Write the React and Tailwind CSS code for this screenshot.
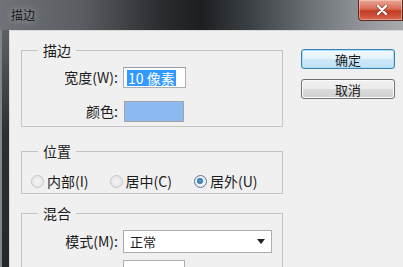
import React from "react";

function Radio({ label, checked }) {
  return (
    <label className="flex items-center gap-[3px]">
      <span
        className={
          checked
            ? "flex h-[13px] w-[13px] items-center justify-center rounded-full border border-[#5a7894] bg-[radial-gradient(circle,#ffffff_0%,#dde5ec_100%)]"
            : "flex h-[13px] w-[13px] items-center justify-center rounded-full border border-[#c6c6c6] bg-[radial-gradient(circle,#f4f4f4_0%,#e2e2e2_100%)]"
        }
      >
        {checked && <span className="h-[6px] w-[6px] rounded-full bg-[radial-gradient(circle,#5f9fd6_0%,#1e5a92_100%)]" />}
      </span>
      <span>{label}</span>
    </label>
  );
}

function Group({ title, className, children }) {
  return (
    <fieldset className={`border border-[#c4c4c4] px-0 pb-[4px] ${className || ""}`}>
      <legend className="ml-[16px] px-[5px] text-[14px] leading-[16px]">{title}</legend>
      {children}
    </fieldset>
  );
}

export default function App() {
  return (
    <div className="flex h-[267px] w-[403px] flex-col overflow-hidden bg-[#2a2e32] font-['Noto_Sans_CJK_SC','Noto_Sans',sans-serif] text-[#1b1b1b]">
      {/* title bar */}
      <div className="flex h-[30px] shrink-0 items-start justify-between bg-[linear-gradient(90deg,#6f7377_0%,#5a5e62_20%,#2a2d30_40%,#1c1f22_50%,#3b4044_62%,#6f7479_78%,#979b9f_92%,#a7abae_100%)]">
        <span className="ml-[11px] mt-[7px] text-[12px] leading-[16px] text-[#141414] [text-shadow:0_0_6px_rgba(255,255,255,0.55)]">
          描边
        </span>
        <div className="flex h-[21px] w-[45px] items-center justify-center rounded-bl-[4px] border border-t-0 border-[#5a2a22] bg-[linear-gradient(180deg,#e9a898_0%,#d86b55_45%,#c23a22_55%,#d7664c_100%)] pl-[3px] shadow-[inset_0_0_0_1px_rgba(255,220,210,0.45)]">
          <svg width="12" height="10" viewBox="0 0 12 10">
            <path d="M2 1l8 8M10 1l-8 8" stroke="#5a1a10" strokeWidth="4" strokeLinecap="round" opacity="0.45" />
            <path d="M2 1l8 8M10 1l-8 8" stroke="#ffffff" strokeWidth="2.4" strokeLinecap="round" />
          </svg>
        </div>
      </div>

      <div className="flex flex-1">
        {/* left frame */}
        <div className="w-[9px] shrink-0 border-l-[2px] border-[#80858a] bg-[linear-gradient(180deg,#5d6166_0%,#2c3034_40%,#23272b_100%)]" />

        {/* content */}
        <div className="flex flex-1 border-l border-t border-[#d9d9d9] bg-[#f0f0f0] pl-[11px] pt-[11px]">
          <div className="flex w-[262px] flex-col">
            <Group title="描边">
              <div className="flex flex-col gap-[13px] pt-[9px]">
                <div className="flex h-[21px] items-center gap-[5px]">
                  <span className="w-[96px] text-right text-[14px]">宽度(W):</span>
                  <div className="flex h-[21px] w-[63px] items-center border border-[#abadb3] border-t-[#9a9ca3] bg-white pl-[3px]">
                    <span className="bg-[#3399ff] px-[1px] text-[14px] leading-[16px] text-white">10 像素</span>
                  </div>
                </div>
                <div className="flex h-[21px] items-center gap-[6px]">
                  <span className="w-[96px] text-right text-[14px]">颜色:</span>
                  <div className="h-[21px] w-[60px] border border-[#a3a3a3] bg-[#8db9f3]" />
                </div>
              </div>
            </Group>

            <Group title="位置" className="mt-[16px]">
              <div className="mt-[14px] flex h-[16px] items-center pl-[9px] text-[14px] leading-[16px]">
                <Radio label="内部(I)" />
                <div className="w-[21px]" />
                <Radio label="居中(C)" />
                <div className="w-[22px]" />
                <Radio label="居外(U)" checked />
              </div>
            </Group>

            <Group title="混合" className="mt-[11px]">
              <div className="flex flex-col gap-[7px] pt-[9px]">
                <div className="flex h-[23px] items-center gap-[5px]">
                  <span className="w-[96px] text-right text-[14px]">模式(M):</span>
                  <div className="flex h-[23px] w-[149px] items-center justify-between border border-[#abadb3] bg-white pl-[6px] pr-[6px]">
                    <span className="text-[13px]">正常</span>
                    <svg width="8" height="5" viewBox="0 0 8 5">
                      <path d="M0 0h8L4 5z" fill="#222" />
                    </svg>
                  </div>
                </div>
                <div className="flex h-[21px] items-center gap-[5px]">
                  <span className="w-[96px]" />
                  <div className="h-[21px] w-[62px] border border-[#abadb3] bg-white" />
                </div>
              </div>
            </Group>
          </div>

          {/* buttons */}
          <div className="ml-[18px] mt-[7px] flex w-[94px] flex-col gap-[10px] text-[13px]">
            <button className="h-[20px] rounded-[3px] border border-[#3c7fb1] bg-[linear-gradient(180deg,#f2f9fd_0%,#e3f2fb_50%,#cde8f8_51%,#c2e2f6_100%)] leading-none shadow-[inset_0_0_0_1px_#a6e0fb]">
              确定
            </button>
            <button className="h-[20px] rounded-[3px] border border-[#707070] bg-[linear-gradient(180deg,#f2f2f2_0%,#ebebeb_50%,#dddddd_51%,#cfcfcf_100%)] leading-none shadow-[inset_0_0_0_1px_#fbfbfb]">
              取消
            </button>
          </div>
        </div>
      </div>
    </div>
  );
}
